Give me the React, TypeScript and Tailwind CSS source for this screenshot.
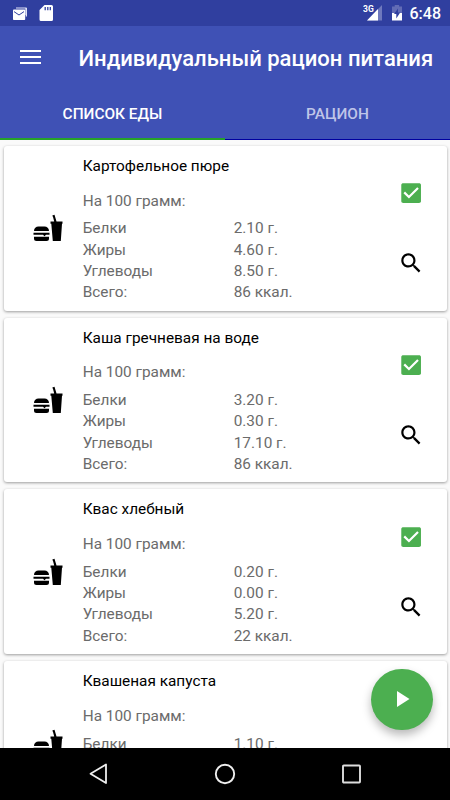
import React from 'react';

type Food = { name: string; protein: string; fat: string; carbs: string; total: string };

const foods: Food[] = [
  { name: 'Картофельное пюре', protein: '2.10 г.', fat: '4.60 г.', carbs: '8.50 г.', total: '86 ккал.' },
  { name: 'Каша гречневая на воде', protein: '3.20 г.', fat: '0.30 г.', carbs: '17.10 г.', total: '86 ккал.' },
  { name: 'Квас хлебный', protein: '0.20 г.', fat: '0.00 г.', carbs: '5.20 г.', total: '22 ккал.' },
  { name: 'Квашеная капуста', protein: '1.10 г.', fat: '', carbs: '', total: '' },
];

function StatusBar() {
  return (
    <div className="flex h-[26px] shrink-0 items-center bg-[#303f9f] text-white">
      <svg className="mt-[1px] ml-[12px] h-[14px] w-[16px]" viewBox="0 0 16 14">
        <path d="M4 1h10v7" fill="none" stroke="#dfe2f5" strokeWidth="1.2" />
        <path d="M14.4 1v8.5" stroke="#dfe2f5" strokeWidth="1.2" />
        <rect x="1" y="2.6" width="12.2" height="10.4" rx="0.8" fill="white" />
        <path d="M2 4.6l5 3.4 5-3.4" fill="none" stroke="#303f9f" strokeWidth="1" />
      </svg>
      <svg className="ml-[11px] h-[18px] w-[15px]" viewBox="0 0 15 18">
        <path d="M5.5 1H12.5a1.5 1.5 0 0 1 1.5 1.5V15.5a1.5 1.5 0 0 1-1.5 1.5H2a1.5 1.5 0 0 1-1.5-1.5V6z" fill="white" />
        <path d="M6.2 3v3.2M8.8 3v3.2M11.3 3v3.2" stroke="#303f9f" strokeWidth="1.3" />
      </svg>
      <svg className="ml-auto h-[18px] w-[20px]" viewBox="0 0 20 18">
        <path d="M19 1v15.5H4z" fill="#6f79bd" />
        <path d="M15 5v11.5H4z" fill="white" />
        <rect width="11" height="9" fill="#303f9f" />
        <text x="0" y="8" fill="white" fontSize="8.5" fontWeight="700" fontFamily="Roboto, sans-serif">3G</text>
      </svg>
      <svg className="ml-[8px] h-[18px] w-[12px]" viewBox="0 0 12 18">
        <path d="M3.7 1h4.400v1.500H11V9H1V2.500h2.700z" fill="#626cb5" />
        <path d="M1 9h10v7.500H1z" fill="white" />
        <path d="M7 4.500v4h2.200L5.300 14.500V10H3z" fill="#303f9f" />
      </svg>
      <span className="mr-[9px] ml-[7px] pt-[2px] text-[16px] leading-none font-medium">6:48</span>
    </div>
  );
}

function FastFood() {
  return (
    <svg className="h-[28px] w-[31px]" viewBox="0 0 31 28">
      <path d="M1 17C1 14 3 12.500 5.500 12.500h6C14 12.500 16 14 16 17zM.5 18.700h16v2H13l-1.500 1.500L10 20.700H.5zM1 22.800h15v1.700a2.500 2.500 0 0 1-2.500 2.500h-10A2.500 2.500 0 0 1 1 24.500z" />
      <path d="M19.300 1.500l2.200-.8 2 6.800H29.500v2.300h-.5L27.800 27h-8L18.300 9.800h-.8V7.500h3.700l-1.100-4.200z" />
    </svg>
  );
}

function FoodCard({ food }: { food: Food }) {
  const rows = [
    ['Белки', food.protein],
    ['Жиры', food.fat],
    ['Углеводы', food.carbs],
    ['Всего:', food.total],
  ].filter(([, value]) => value !== '');
  return (
    <article className="flex h-[164.500px] shrink-0 rounded-[3px] bg-white shadow-[0_1px_3px_rgba(0,0,0,0.38)]">
      <div className="flex w-[79.200px] items-center pl-[29px]">
        <FastFood />
      </div>
      <div className="flex-1 pt-[10px] text-[15.360px] text-[#6b6b6b]">
        <h2 className="leading-[20px] text-black">{food.name}</h2>
        <p className="mt-[14.800px] leading-[20px]">На 100 грамм:</p>
        <dl className="mt-[7.700px]">
          {rows.map(([label, value]) => (
            <div key={label} className="flex leading-[21.300px]">
              <dt className="w-[151px]">{label}</dt>
              <dd>{value}</dd>
            </div>
          ))}
        </dl>
      </div>
      <div className="flex w-[48.300px] flex-col pt-[34.300px]">
        <svg className="size-[26.250px]" viewBox="0 0 24 24">
          <path fill="#4caf50" d="M19.200 3H4.800C3.800 3 3 3.600 3 4.500v15c0 .9.800 1.500 1.800 1.500h14.400c1 0 1.800-.6 1.800-1.500v-15c0-.9-.8-1.500-1.800-1.500z" />
          <path fill="white" d="M10 17l-5-5 1.410-1.410L10 14.170l7.590-7.590L19 8z" />
        </svg>
        <svg className="mt-[43.700px] size-[26.250px]" viewBox="0 0 24 24">
          <path d="M15.500 14h-.79l-.28-.27C15.410 12.590 16 11.110 16 9.500 16 5.910 13.090 3 9.500 3S3 5.910 3 9.500 5.910 16 9.500 16c1.610 0 3.090-.59 4.230-1.570l.27.28v.79l5 4.990L20.490 19l-4.990-5zm-6 0C7.010 14 5 11.990 5 9.500S7.010 5 9.500 5 14 7.010 14 9.500 11.990 14 9.500 14z" />
        </svg>
      </div>
    </article>
  );
}

export default function App() {
  return (
    <div className="relative flex h-[800px] w-[450px] flex-col overflow-hidden bg-[#fafafa] font-['Roboto','Noto_Sans',sans-serif]">
      <StatusBar />
      <header className="h-[114px] shrink-0 bg-[#3f51b5] text-white">
        <div className="flex h-[62px] items-center pl-[20px]">
          <svg className="h-[16px] w-[21px]" viewBox="0 0 21 16">
            <path d="M0 2h21M0 8h21M0 14h21" stroke="white" strokeWidth="2.200" />
          </svg>
          <h1 className="ml-[37.500px] pt-[3px] text-[22.050px] font-medium whitespace-nowrap">Индивидуальный рацион питания</h1>
        </div>
        <nav className="flex h-[52px] text-[15.400px] font-medium">
          <div className="flex flex-1 items-center justify-center border-b-2 border-[#26a22a] pt-[4px]">СПИСОК ЕДЫ</div>
          <div className="flex flex-1 items-center justify-center border-b border-[#0000a0] pt-[3px] text-[#bfc5e8]">РАЦИОН</div>
        </nav>
      </header>
      <main className="flex min-h-0 flex-1 flex-col gap-[7.200px] overflow-hidden px-[3.500px] pt-[6px]">
        {foods.map((food) => (
          <FoodCard key={food.name} food={food} />
        ))}
      </main>
      <button className="absolute top-[668.500px] left-[371px] flex size-[61.500px] items-center justify-center rounded-full bg-[#4caf50] shadow-[0_5px_10px_rgba(0,0,0,0.28)]">
        <svg className="ml-[3px] h-[16px] w-[13px]" viewBox="0 0 13 16">
          <path d="M0 0l12.500 8L0 16z" fill="white" />
        </svg>
      </button>
      <footer className="z-10 flex h-[52px] shrink-0 items-center bg-black pl-[88px]">
        <svg className="h-[24px] w-[20px]" viewBox="0 0 20 24">
          <path d="M18 2.500v18.500L2.500 11.800z" fill="none" stroke="#eee" strokeWidth="1.800" strokeLinejoin="round" />
        </svg>
        <svg className="ml-[106px] size-[22px]" viewBox="0 0 22 22">
          <circle cx="11" cy="11" r="9.200" fill="none" stroke="#eee" strokeWidth="1.900" />
        </svg>
        <svg className="ml-[105px] size-[20px]" viewBox="0 0 20 20">
          <rect x="2" y="1.500" width="17" height="17" rx="0.800" fill="none" stroke="#ddd" strokeWidth="1.900" />
        </svg>
      </footer>
    </div>
  );
}
